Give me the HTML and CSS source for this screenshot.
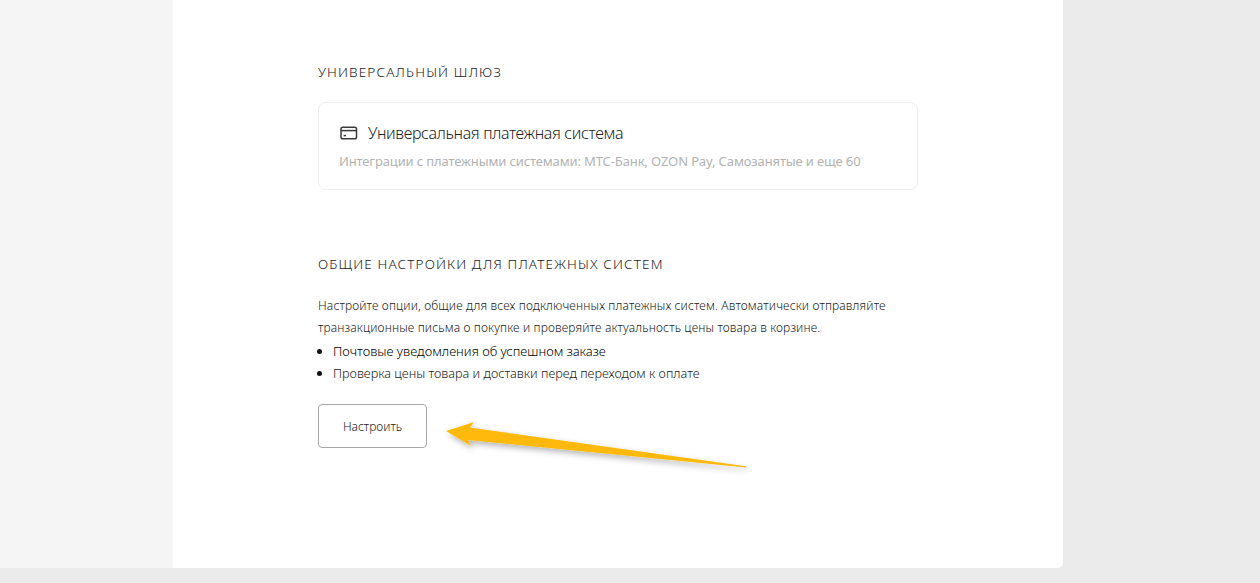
FILE: index.html
```html
<!DOCTYPE html>
<html lang="ru">
<head>
  <meta charset="UTF-8" />
  <title>Платежные системы</title>
  <link rel="stylesheet" href="styles.css">
</head>
<body>
  <div class="layout">
    <div class="sidebar"></div>

    <div class="content">
      <section class="section section-gateway">
        <h2>Универсальный шлюз</h2>
        <div class="pay-card">
          <div class="pay-title">
            <svg class="pay-icon" width="18" height="14" viewBox="0 0 18 14" fill="none">
              <rect x="1" y="1.2" width="15.5" height="11.6" rx="1.8" stroke="#3a3a3a" stroke-width="1.5"/>
              <path d="M1 4.6H16.5" stroke="#3a3a3a" stroke-width="1.5"/>
              <path d="M3.6 9.6H6" stroke="#3a3a3a" stroke-width="1.5"/>
            </svg>
            <span>Универсальная платежная система</span>
          </div>
          <p class="pay-desc">Интеграции с платежными системами: МТС-Банк, OZON Pay, Самозанятые и еще 60</p>
        </div>
      </section>

      <section class="section section-common">
        <h2>Общие настройки для платежных систем</h2>
        <p class="text">Настройте опции, общие для всех подключенных платежных систем. Автоматически отправляйте транзакционные письма о покупке и проверяйте актуальность цены товара в корзине.</p>
        <ul class="features">
          <li class="feature-main">Почтовые уведомления об успешном заказе</li>
          <li>Проверка цены товара и доставки перед переходом к оплате</li>
        </ul>
        <button class="btn" type="button">Настроить</button>
      </section>
    </div>
  </div>

  <svg class="arrow" width="320" height="70" viewBox="0 0 320 70">
    <defs>
      <filter id="arrow-shadow" x="-10%" y="-40%" width="120%" height="200%">
        <feDropShadow dx="2" dy="3" stdDeviation="3" flood-color="#000" flood-opacity="0.3"/>
      </filter>
    </defs>
    <polygon points="6,21 34,12 30,17.5 306,56.2 306,57.4 28,30 31,36" fill="#ffb90b" filter="url(#arrow-shadow)"/>
  </svg>
</body>
</html>
```

FILE: styles.css
```css
* {
  box-sizing: border-box;
  margin: 0;
  padding: 0;
}

html,
body {
  height: 583px;
  overflow: hidden;
}

body {
  position: relative;
  font-family: "Noto Sans", sans-serif;
  background-color: #ebebeb;
  color: #222;
}

.layout {
  display: flex;
  height: 568px;
}

.sidebar {
  width: 173px;
  background-color: #f5f5f5;
}

.content {
  width: 890px;
  padding: 65px 145px 0;
  background: white;
  border-bottom-right-radius: 5px;
}

.section-common {
  margin-top: 67px;
}

h2 {
  font-size: 13.5px;
  line-height: 15px;
  font-weight: 300;
  letter-spacing: 1.15px;
  text-transform: uppercase;
  color: #222;
}

.pay-card {
  width: 600px;
  height: 88px;
  margin-top: 22px;
  padding: 20px 20px 0;
  border: 1px solid #eeeeee;
  border-radius: 8px;
}

.pay-title {
  display: flex;
  align-items: center;
  gap: 10px;
  margin-left: 1px;
  font-size: 16px;
  line-height: 20px;
  font-weight: 300;
  letter-spacing: -0.35px;
  color: #222;
}

.pay-desc {
  margin-top: 8px;
  font-size: 13px;
  line-height: 20px;
  letter-spacing: -0.13px;
  color: #b2b2b2;
}

.text {
  margin-top: 23px;
  width: 590px;
  font-size: 12px;
  line-height: 22px;
  font-weight: 300;
  letter-spacing: 0.15px;
}

.features {
  margin-top: 1px;
  list-style: none;
  font-size: 12.7px;
  line-height: 22px;
  font-weight: 300;
}

.features li {
  display: flex;
  align-items: center;
  gap: 11px;
  height: 22px;
  margin-left: -2px;
}

.features li::before {
  content: "";
  width: 5px;
  height: 5px;
  margin-left: 1px;
  border-radius: 50%;
  background: #111;
}

.feature-main {
  font-size: 13px;
  color: #000;
}

.btn {
  display: block;
  width: 109px;
  height: 44px;
  margin-top: 20px;
  background: white;
  border: 1px solid #a8a8a8;
  border-radius: 4px;
  font-family: inherit;
  font-size: 12px;
  font-weight: 300;
  color: #222;
}

.arrow {
  position: absolute;
  left: 440px;
  top: 410px;
}
```
